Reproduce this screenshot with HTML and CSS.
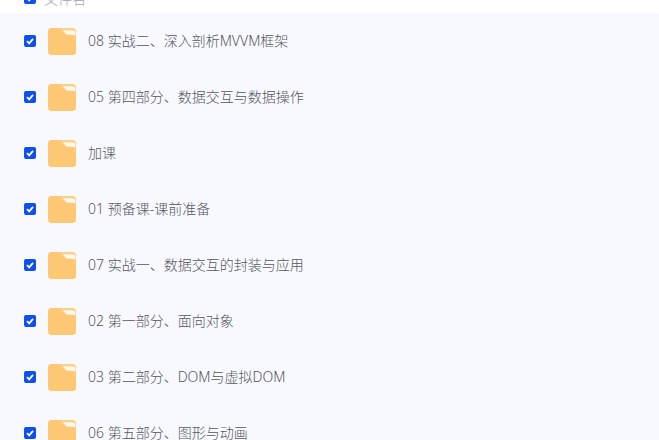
FILE: index.html
```html
<!DOCTYPE html>
<html lang="zh">
<head>
<meta charset="utf-8">
<title>文件列表</title>
<link rel="stylesheet" href="styles.css">
</head>
<body>
<svg class="defs" width="0" height="0" aria-hidden="true">
  <symbol id="folder" viewBox="0 0 28 27">
    <rect width="28" height="27" rx="4" fill="#ffc875"/>
    <path d="M3.500 0H24.500C26.500 0 28 1.500 28 3.500V8H3.500z" fill="#ffd08a"/>
    <path d="M12 2.500h13c1.400 0 2.300.9 2.300 2.200V9c-.5-1.400-1.500-2.200-3-2.200H18c-1.700 0-2.700-.7-3.600-1.800z" fill="#fffaf2"/>
    <path d="M0 4a4 4 0 0 1 4-4h6.500c1.500 0 2.500.6 3.500 1.700l3 3.300c.8 1 1.800 1.800 3.500 1.800H24c2 0 4 1.200 4 3.200V23a4 4 0 0 1-4 4H4a4 4 0 0 1-4-4z" fill="#ffc875"/>
  </symbol>
  <symbol id="tick" viewBox="0 0 12 12">
    <rect width="12" height="12" rx="2" fill="#0f4ff0"/>
    <path d="M3 6.200 5.200 8.400 9 3.900" fill="none" stroke="#fff" stroke-width="1.800"/>
  </symbol>
</svg>
<header class="head">
  <div class="head-inner">
    <svg class="check"><use href="#tick"/></svg>
    <span class="head-label">文件名</span>
  </div>
</header>
<main class="list">
  <div class="row"><svg class="check"><use href="#tick"/></svg><svg class="folder"><use href="#folder"/></svg><span class="name">08 实战二、深入剖析MVVM框架</span></div>
  <div class="row"><svg class="check"><use href="#tick"/></svg><svg class="folder"><use href="#folder"/></svg><span class="name">05 第四部分、数据交互与数据操作</span></div>
  <div class="row"><svg class="check"><use href="#tick"/></svg><svg class="folder"><use href="#folder"/></svg><span class="name">加课</span></div>
  <div class="row"><svg class="check"><use href="#tick"/></svg><svg class="folder"><use href="#folder"/></svg><span class="name">01 预备课-课前准备</span></div>
  <div class="row"><svg class="check"><use href="#tick"/></svg><svg class="folder"><use href="#folder"/></svg><span class="name">07 实战一、数据交互的封装与应用</span></div>
  <div class="row"><svg class="check"><use href="#tick"/></svg><svg class="folder"><use href="#folder"/></svg><span class="name">02 第一部分、面向对象</span></div>
  <div class="row"><svg class="check"><use href="#tick"/></svg><svg class="folder"><use href="#folder"/></svg><span class="name">03 第二部分、DOM与虚拟DOM</span></div>
  <div class="row"><svg class="check"><use href="#tick"/></svg><svg class="folder"><use href="#folder"/></svg><span class="name">06 第五部分、图形与动画</span></div>
</main>
</body>
</html>
```
FILE: styles.css
```css
html, body {
  margin: 0;
  height: 100%;
  overflow: hidden;
  background: #f8f9ff;
}
body {
  font-family: "Noto Sans", "Noto Sans CJK SC", sans-serif;
  font-size: 14px;
  font-weight: 300;
  color: #54585e;
}
.defs {
  display: block;
}
.head {
  height: 13px;
  background: #fff;
  overflow: hidden;
}
.head-inner {
  display: flex;
  align-items: center;
  height: 20px;
  margin-top: -12px;
  padding-left: 24px;
}
.head-label {
  margin-left: 8px;
  color: #a0a4aa;
}
.row {
  display: flex;
  align-items: center;
  height: 56px;
  padding-left: 24px;
}
.check {
  width: 12px;
  height: 12px;
  flex: none;
}
.folder {
  width: 28px;
  height: 27px;
  flex: none;
  margin-left: 12px;
  margin-right: 12px;
}
.name {
  white-space: nowrap;
  line-height: 20px;
}
```
